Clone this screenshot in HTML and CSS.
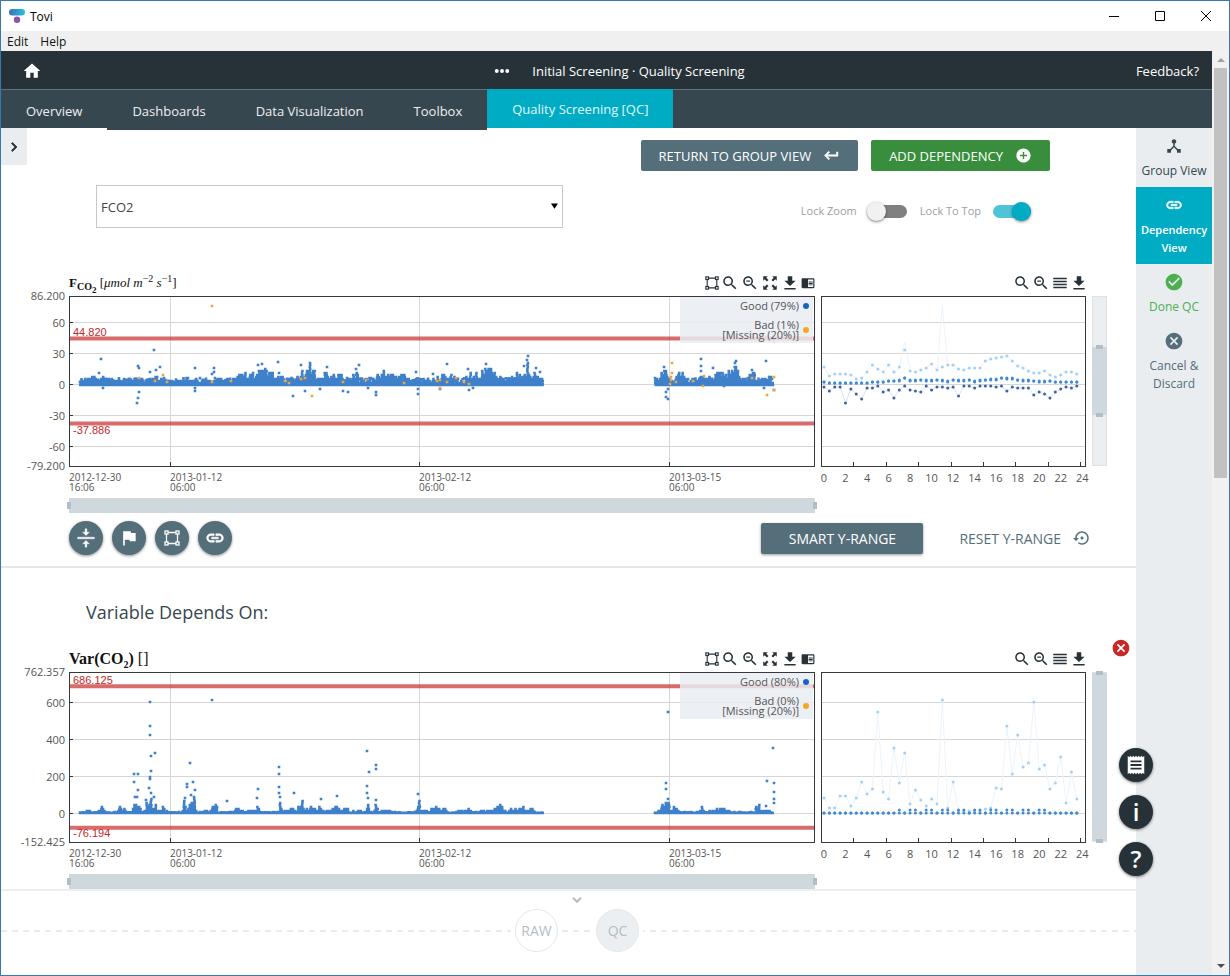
FILE: index.html
```html
<!DOCTYPE html>
<html lang="en">
<head>
  <meta charset="UTF-8">
  <title>Tovi</title>
  <link rel="stylesheet" href="styles.css">
</head>
<body>

  <!-- icon set -->
  <svg class="symbols" aria-hidden="true">
    <symbol id="i-home" viewBox="0 0 24 24"><path d="M10 20v-6h4v6h5v-8h3L12 3 2 12h3v8z"/></symbol>
    <symbol id="i-more" viewBox="0 0 24 24"><circle cx="5" cy="12" r="2.6"/><circle cx="12" cy="12" r="2.6"/><circle cx="19" cy="12" r="2.6"/></symbol>
    <symbol id="i-right" viewBox="0 0 24 24"><path d="M8.6 16.6L13.2 12 8.6 7.400 10 6l6 6-6 6z" stroke="currentColor"/></symbol>
    <symbol id="i-down" viewBox="0 0 24 24"><path d="M6 8.600L12 14.600l6-6" fill="none" stroke="currentColor" stroke-width="3"/></symbol>
    <symbol id="i-return" viewBox="0 0 24 24"><path d="M19 7v4H5.830l3.580-3.590L8 6l-6 6 6 6 1.410-1.410L5.830 13H21V7z" stroke="currentColor" stroke-width=".8"/></symbol>
    <symbol id="i-add" viewBox="0 0 24 24"><path d="M12 2C6.480 2 2 6.480 2 12s4.480 10 10 10 10-4.480 10-10S17.520 2 12 2zm5 11h-4v4h-2v-4H7v-2h4V7h2v4h4v2z"/></symbol>
    <symbol id="i-link" viewBox="0 0 24 24"><path d="M3.900 12c0-1.710 1.390-3.100 3.100-3.100h4V7H7c-2.760 0-5 2.240-5 5s2.240 5 5 5h4v-1.900H7c-1.710 0-3.100-1.390-3.100-3.100zM8 13h8v-2H8v2zm9-6h-4v1.900h4c1.710 0 3.100 1.390 3.100 3.100s-1.390 3.100-3.100 3.100h-4V17h4c2.760 0 5-2.240 5-5s-2.240-5-5-5z" stroke="currentColor" stroke-width=".7"/></symbol>
    <symbol id="i-check" viewBox="0 0 24 24"><path d="M12 2C6.480 2 2 6.480 2 12s4.480 10 10 10 10-4.480 10-10S17.520 2 12 2zm-2 15l-5-5 1.410-1.410L10 14.170l7.590-7.590L19 8l-9 9z"/></symbol>
    <symbol id="i-cancel" viewBox="0 0 24 24"><path d="M12 2C6.470 2 2 6.470 2 12s4.470 10 10 10 10-4.470 10-10S17.530 2 12 2zm5 13.590L15.590 17 12 13.410 8.410 17 7 15.590 10.590 12 7 8.410 8.410 7 12 10.590 15.590 7 17 8.410 13.410 12 17 15.590z"/></symbol>
    <symbol id="i-hub" viewBox="0 0 24 24"><path d="M17 16l-4-4V8.820C14.160 8.400 15 7.300 15 6c0-1.660-1.340-3-3-3S9 4.340 9 6c0 1.300.84 2.400 2 2.820V12l-4 4H3v5h5v-3.050l4-4.200 4 4.200V21h5v-5h-4z"/></symbol>
    <symbol id="i-search" viewBox="0 0 24 24"><path d="M15.500 14h-.79l-.28-.27C15.410 12.590 16 11.110 16 9.500 16 5.910 13.090 3 9.500 3S3 5.910 3 9.500 5.910 16 9.500 16c1.610 0 3.090-.59 4.230-1.570l.27.28v.79l5 4.990L20.490 19l-4.990-5zm-6 0C7.010 14 5 11.990 5 9.500S7.010 5 9.500 5 14 7.010 14 9.500 11.990 14 9.500 14z"/></symbol>
    <symbol id="i-zoomout" viewBox="0 0 24 24"><use href="#i-search"/><path d="M7 8.700h5v1.600H7z"/></symbol>
    <symbol id="i-select" viewBox="0 0 16 16"><g fill="none" stroke="currentColor" stroke-width="1.300"><path d="M4 2.500h8M4 13.500h8M2.500 4v8M13.500 4v8"/><rect x="1" y="1" width="3" height="3"/><rect x="12" y="1" width="3" height="3"/><rect x="1" y="12" width="3" height="3"/><rect x="12" y="12" width="3" height="3"/></g></symbol>
    <symbol id="i-expand" viewBox="0 0 24 24"><path d="M3 3h6L7 5l3 3-2 2-3-3-2 2zM21 3v6l-2-2-3 3-2-2 3-3-2-2zM3 21v-6l2 2 3-3 2 2-3 3 2 2zM21 21h-6l2-2-3-3 2-2 3 3 2-2z"/></symbol>
    <symbol id="i-download" viewBox="0 0 24 24"><path d="M19.500 9H15V3H9v6H4.500l7.500 7zM4.500 18.500v2h15v-2z"/></symbol>
    <symbol id="i-reader" viewBox="0 0 24 24"><path d="M13 12h7v1.500h-7zm0-2.500h7V11h-7zm0 5h7V16h-7zM21 4H3c-1.100 0-2 .9-2 2v13c0 1.100.9 2 2 2h18c1.100 0 2-.9 2-2V6c0-1.100-.9-2-2-2zm0 15h-9V6h9v13z"/></symbol>
    <symbol id="i-lines" viewBox="0 0 24 24"><path d="M3 15h18v-2H3zM3 19h18v-2H3zM3 11h18V9H3zM3 5v2h18V5z"/></symbol>
    <symbol id="i-center" viewBox="0 0 24 24"><path d="M8 19h3v4h2v-4h3l-4-4zM16 5h-3V1h-2v4H8l4 4zM2 11v2h20v-2z" stroke="currentColor" stroke-width=".5"/></symbol>
    <symbol id="i-flag" viewBox="0 0 24 24"><path d="M14.400 6L14 4H5v17h2v-7h5.600l.4 2h7V6z"/></symbol>
    <symbol id="i-restore" viewBox="0 0 24 24"><path d="M14 12c0-1.100-.9-2-2-2s-2 .9-2 2 .9 2 2 2 2-.9 2-2zm-2-9c-4.970 0-9 4.030-9 9H0l4 4 4-4H5c0-3.870 3.130-7 7-7s7 3.130 7 7-3.130 7-7 7c-1.510 0-2.910-.49-4.060-1.300l-1.420 1.440C8.040 20.300 9.940 21 12 21c4.970 0 9-4.030 9-9s-4.030-9-9-9z"/></symbol>
    <symbol id="i-notes" viewBox="0 0 24 24"><path d="M18 17H6v-2h12v2zm0-4H6v-2h12v2zm0-4H6V7h12v2zM3 22l1.500-1.500L6 22l1.500-1.500L9 22l1.500-1.500L12 22l1.500-1.500L15 22l1.500-1.500L18 22l1.500-1.500L21 22V2l-1.500 1.500L18 2l-1.500 1.500L15 2l-1.500 1.500L12 2l-1.500 1.500L9 2 7.500 3.500 6 2 4.500 3.500 3 2z"/></symbol>
  </svg>

  <div class="window">
    <div class="titlebar">
      <svg class="logo" viewBox="0 0 16 14" aria-hidden="true">
        <defs>
          <linearGradient id="logoBar"><stop offset="0" stop-color="#3b6fb8"/><stop offset="1" stop-color="#27c3dc"/></linearGradient>
        </defs>
        <rect width="16" height="6.500" rx="3.200" fill="url(#logoBar)"/>
        <circle cx="8" cy="10.700" r="3.200" fill="#8d54a8"/>
      </svg>
      <span class="app-name">Tovi</span>
      <button class="win-btn" aria-label="Minimize"><svg viewBox="0 0 10 10"><path d="M0 5.500h10"/></svg></button>
      <button class="win-btn" aria-label="Maximize"><svg viewBox="0 0 10 10"><path d="M.5.5h9v9h-9z"/></svg></button>
      <button class="win-btn" aria-label="Close"><svg viewBox="0 0 10 10"><path d="M0 0l10 10M10 0L0 10"/></svg></button>
    </div>
    <div class="menubar">
      <button>Edit</button>
      <button>Help</button>
    </div>

    <div class="frame">
      <div class="app">
        <header class="header">
          <a href="#" class="home" aria-label="Home"><svg class="icon"><use href="#i-home"/></svg></a>
          <div class="crumbs">
            <svg class="icon"><use href="#i-more"/></svg>
            <span>Initial Screening · Quality Screening</span>
          </div>
          <a href="#" class="feedback">Feedback?</a>
        </header>
        <nav class="tabs">
          <a href="#" class="tab first">Overview</a>
          <a href="#" class="tab">Dashboards</a>
          <a href="#" class="tab">Data Visualization</a>
          <a href="#" class="tab">Toolbox</a>
          <a href="#" class="tab active">Quality Screening [QC]</a>
        </nav>

        <div class="body">
          <main class="main">
            <button class="expander" aria-label="Expand panel"><svg class="icon"><use href="#i-right"/></svg></button>

            <div class="top-actions">
              <button class="btn slate">RETURN TO GROUP VIEW <svg class="icon"><use href="#i-return"/></svg></button>
              <button class="btn green">ADD DEPENDENCY <svg class="icon"><use href="#i-add"/></svg></button>
            </div>

            <div class="controls">
              <div class="picker">
                <select aria-label="Variable"><option>FCO2</option></select>
                <svg viewBox="0 0 8 6" aria-hidden="true"><path d="M0 0h8L4 6z"/></svg>
              </div>
              <div class="switches">
                <label for="lockZoom">Lock Zoom</label>
                <input type="checkbox" id="lockZoom">
                <label for="lockTop">Lock To Top</label>
                <input type="checkbox" id="lockTop" checked>
              </div>
            </div>

            <section class="chart" id="fco2">
              <div class="chart-head">
                <h2 class="math"><b>F<sub>CO<sub>2</sub></sub></b> [<i>μmol m</i><sup>−2</sup> <i>s</i><sup>−1</sup>]</h2>
                <button aria-label="Select"><svg class="icon small"><use href="#i-select"/></svg></button>
                <button aria-label="Zoom in"><svg class="icon"><use href="#i-search"/></svg></button>
                <button aria-label="Zoom out"><svg class="icon"><use href="#i-zoomout"/></svg></button>
                <button aria-label="Expand"><svg class="icon"><use href="#i-expand"/></svg></button>
                <button aria-label="Download"><svg class="icon"><use href="#i-download"/></svg></button>
                <button aria-label="Legend"><svg class="icon small"><use href="#i-reader"/></svg></button>
              </div>
              <div class="chart-head daily-head">
                <button aria-label="Zoom in"><svg class="icon"><use href="#i-search"/></svg></button>
                <button aria-label="Zoom out"><svg class="icon"><use href="#i-zoomout"/></svg></button>
                <button aria-label="Lines"><svg class="icon"><use href="#i-lines"/></svg></button>
                <button aria-label="Download"><svg class="icon"><use href="#i-download"/></svg></button>
              </div>
              <svg class="plot series"></svg>
              <svg class="plot daily"></svg>
              <div class="yslider"><div class="range part"></div></div>
              <div class="xslider"></div>
            </section>

            <div class="chart-actions">
              <button class="round" aria-label="Center"><svg class="icon"><use href="#i-center"/></svg></button>
              <button class="round" aria-label="Flag"><svg class="icon"><use href="#i-flag"/></svg></button>
              <button class="round" aria-label="Select area"><svg class="icon small"><use href="#i-select"/></svg></button>
              <button class="round" aria-label="Link"><svg class="icon"><use href="#i-link"/></svg></button>
              <button class="btn slate smart">SMART Y-RANGE</button>
              <button class="reset">RESET Y-RANGE <svg class="icon"><use href="#i-restore"/></svg></button>
            </div>

            <h3 class="depends">Variable Depends On:</h3>

            <section class="chart" id="varco2">
              <div class="chart-head">
                <h2 class="math large"><b>Var(CO<sub>2</sub>)</b> []</h2>
                <button aria-label="Select"><svg class="icon small"><use href="#i-select"/></svg></button>
                <button aria-label="Zoom in"><svg class="icon"><use href="#i-search"/></svg></button>
                <button aria-label="Zoom out"><svg class="icon"><use href="#i-zoomout"/></svg></button>
                <button aria-label="Expand"><svg class="icon"><use href="#i-expand"/></svg></button>
                <button aria-label="Download"><svg class="icon"><use href="#i-download"/></svg></button>
                <button aria-label="Legend"><svg class="icon small"><use href="#i-reader"/></svg></button>
              </div>
              <div class="chart-head daily-head">
                <button aria-label="Zoom in"><svg class="icon"><use href="#i-search"/></svg></button>
                <button aria-label="Zoom out"><svg class="icon"><use href="#i-zoomout"/></svg></button>
                <button aria-label="Lines"><svg class="icon"><use href="#i-lines"/></svg></button>
                <button aria-label="Download"><svg class="icon"><use href="#i-download"/></svg></button>
              </div>
              <svg class="plot series"></svg>
              <svg class="plot daily"></svg>
              <div class="yslider"><div class="range"></div></div>
              <div class="xslider"></div>
              <button class="remove" aria-label="Remove dependency"><svg class="icon"><use href="#i-cancel"/></svg></button>
            </section>

            <footer class="stages">
              <button class="collapse" aria-label="Collapse"><svg class="icon"><use href="#i-down"/></svg></button>
              <div class="rail">
                <button class="stage">RAW</button>
                <button class="stage current">QC</button>
              </div>
            </footer>

            <div class="floating">
              <button aria-label="Notes"><svg class="icon"><use href="#i-notes"/></svg></button>
              <button>i</button>
              <button>?</button>
            </div>
          </main>

          <aside class="sidebar">
            <a href="#" class="side-item"><svg class="icon"><use href="#i-hub"/></svg>Group View</a>
            <a href="#" class="side-item active"><svg class="icon"><use href="#i-link"/></svg>Dependency View</a>
            <a href="#" class="side-item done"><svg class="icon"><use href="#i-check"/></svg>Done QC</a>
            <a href="#" class="side-item discard"><svg class="icon"><use href="#i-cancel"/></svg>Cancel &amp; Discard</a>
          </aside>
        </div>
      </div>
      <div class="scrollbar">
        <svg class="up" viewBox="0 0 8 4"><path d="M0 4h8L4 0z"/></svg>
        <div class="thumb"></div>
        <svg class="down" viewBox="0 0 8 4"><path d="M0 0h8L4 4z"/></svg>
      </div>
    </div>
  </div>

  <script src="script.js"></script>
</body>
</html>
```
FILE: styles.css
```css
* {
  box-sizing: border-box;
}

body {
  margin: 0;
  font-family: "Open Sans", "Noto Sans", sans-serif;
  font-size: 13px;
  color: #37474f;
  background: #fff;
}

button {
  font-family: inherit;
  font-size: inherit;
  color: inherit;
  padding: 0;
  border: none;
  background: none;
  cursor: pointer;
}

a {
  color: inherit;
  text-decoration: none;
}

.symbols {
  position: absolute;
  width: 0;
  height: 0;
}

.icon {
  display: block;
  width: 18px;
  height: 18px;
  fill: currentColor;
}

.icon.small {
  width: 14px;
}

.window {
  display: flex;
  flex-direction: column;
  min-height: 100vh;
  border: 1px solid #3579ad;
}

/* window chrome */
.titlebar {
  display: flex;
  align-items: center;
  height: 30px;
  padding-left: 8px;
  color: #000;
  font-size: 12px;
}

.logo {
  width: 16px;
  height: 14px;
}

.app-name {
  flex: 1;
  padding-left: 5px;
}

.win-btn {
  width: 46px;
  height: 30px;
}

.win-btn svg {
  width: 10px;
  height: 10px;
  fill: none;
  stroke: #000;
  overflow: visible;
}

.menubar {
  display: flex;
  gap: 12px;
  height: 20px;
  padding-left: 6px;
  background: #f0f0f0;
  color: #111;
  font-size: 12px;
}

.frame {
  display: flex;
  flex: 1;
}

.app {
  flex: 1;
  min-width: 0;
  display: flex;
  flex-direction: column;
}

.scrollbar {
  width: 17px;
  padding: 7px 2px;
  display: flex;
  flex-direction: column;
  align-items: center;
  background: #f1f1f1;
}

.scrollbar svg {
  width: 8px;
  height: 4px;
}

.scrollbar .up {
  fill: #a0a0a0;
}

.scrollbar .down {
  margin-top: auto;
  fill: #505050;
}

.thumb {
  width: 13px;
  height: 45%;
  margin-top: 6px;
  background: #c1c1c1;
}

/* header */
.header {
  display: grid;
  grid-template-columns: 1fr auto 1fr;
  align-items: center;
  height: 39px;
  padding: 1px 13px 0 21px;
  background: #263238;
  border-bottom: 1px solid #62727a;
  color: #fff;
}

.home .icon {
  width: 20px;
  height: 20px;
}

.crumbs {
  display: flex;
  align-items: center;
  gap: 21px;
  margin-left: 17px;
}

.feedback {
  justify-self: end;
}

.tabs {
  display: flex;
  align-items: flex-start;
  height: 38px;
  background: #37474f;
  color: #eceff1;
}

.tab {
  height: 40px;
  padding: 0 25px;
  line-height: 42px;
  background: #37474f;
  white-space: nowrap;
}

.tab.first {
  height: 38px;
}

.tab.active {
  height: 39px;
  line-height: 41px;
  margin-top: -1px;
  background: #00acc4;
  color: #e0f7fa;
}

.body {
  flex: 1;
  display: flex;
}

.main {
  position: relative;
  flex: 1;
  min-width: 0;
  display: flex;
  flex-direction: column;
}

.expander {
  position: absolute;
  left: 0;
  top: 0;
  width: 26px;
  height: 37px;
  padding-left: 4px;
  background: #e9edf0;
  color: #263238;
}

.expander .icon {
  width: 18px;
  height: 18px;
}

/* top controls */
.top-actions {
  display: flex;
  justify-content: flex-end;
  gap: 13px;
  padding: 12px 86px 0 0;
}

.btn {
  display: flex;
  align-items: center;
  justify-content: center;
  gap: 12px;
  height: 31px;
  padding: 0 18px;
  border-radius: 2px;
  color: #fff;
}

.slate {
  background: #546e7a;
}

.green {
  background: #388e3c;
}

.btn .icon {
  width: 17px;
  height: 17px;
}

.controls {
  display: flex;
  align-items: center;
  justify-content: space-between;
  padding: 14px 105px 44px 95px;
}

.picker {
  position: relative;
  flex: 0 1 467px;
}

.picker select {
  appearance: none;
  width: 100%;
  height: 43px;
  padding: 0 4px;
  border: 1px solid #c8c8c8;
  border-radius: 0;
  background: #fff;
  font-family: inherit;
  font-size: 13px;
  color: #444;
}

.picker svg {
  position: absolute;
  right: 5px;
  top: 18px;
  width: 7px;
  height: 6px;
}

.switches {
  display: flex;
  align-items: center;
  gap: 10px;
  padding-top: 8px;
  font-size: 11px;
  color: #9e9e9e;
}

.switches input {
  appearance: none;
  position: relative;
  width: 40px;
  height: 20px;
  margin: 0;
}

.switches input + label {
  margin-left: 3px;
}

.switches input::before {
  content: "";
  position: absolute;
  inset: 4px 0 3px 2px;
  border-radius: 7px;
  background: #808080;
}

.switches input::after {
  content: "";
  position: absolute;
  left: 0;
  top: 1px;
  width: 19px;
  height: 19px;
  border-radius: 50%;
  background: #f1f1f1;
  box-shadow: 0 1px 3px rgba(0, 0, 0, 0.5);
}

.switches input:checked::before {
  background: #4dc5d6;
}

.switches input:checked::after {
  left: 21px;
  background: #00acc4;
}

/* charts */
.chart {
  position: relative;
  display: grid;
  grid-template-columns: minmax(0, 1fr) 265px 15px;
  column-gap: 6px;
  padding: 0 29px 0 68px;
}

.chart-head {
  grid-column: 1;
  display: flex;
  align-items: center;
  gap: 2px;
  height: 24px;
  padding-bottom: 3px;
  color: #263238;
}

.daily-head {
  grid-column: 2;
  justify-content: flex-end;
  gap: 1px;
  margin-right: -2px;
}

.math {
  flex: 1;
  margin: 0;
  font-family: "Liberation Serif", serif;
  font-size: 13px;
  font-weight: normal;
  line-height: 20px;
  color: #111;
}

.math.large {
  font-size: 16px;
}

.math sub,
.math sup {
  font-size: 10px;
  line-height: 0;
}

.math sub sub {
  font-size: 9px;
}

.plot {
  width: 100%;
  height: 200px;
  overflow: visible;
}

.series {
  grid-column: 1;
}

.daily {
  grid-column: 2;
}

.plot text {
  font-size: 11px;
  fill: #555;
}

.plot .date {
  font-size: 10px;
}

.plot .frame-line {
  fill: none;
  stroke: #37383c;
}

.plot .tick {
  stroke: #37383c;
}

.plot .grid {
  stroke: #d6d6d6;
}

.plot .limit {
  stroke: #c62828;
  stroke-width: 4;
  opacity: 0.68;
}

.plot .limit-text {
  font-family: "Liberation Sans", Arial, sans-serif;
  font-size: 11px;
  fill: #c62828;
}

.plot .good {
  fill: #3f80cb;
}

.plot .bad {
  fill: #e9a63c;
}

.plot .legend-bg {
  fill: #e9ecf2;
  opacity: 0.85;
}

.plot .legend-good {
  fill: #1565c0;
}

.plot .legend-bad {
  fill: #f5a623;
}

.plot .high {
  fill: #a6cff0;
}

.plot .mid {
  fill: #3d8bd6;
}

.plot .low {
  fill: #40609f;
}

.plot .trace {
  fill: none;
  stroke: #ecf4fb;
}

.plot .trace.dark {
  stroke: #d9e2f0;
}

.xslider {
  grid-column: 1;
  position: relative;
  height: 15px;
  margin-top: 2px;
  background: #cfd8dc;
}

.xslider::before,
.xslider::after {
  content: "";
  position: absolute;
  top: 4px;
  left: -2px;
  width: 4px;
  height: 7px;
  background: #b0bec5;
}

.xslider::after {
  left: auto;
  right: -2px;
}

.yslider {
  grid-column: 3;
  position: relative;
  height: 170px;
  background: #eceff1;
  border: 1px solid #dfe2e4;
}

.range {
  position: absolute;
  inset: 0 -1px;
  background: #cfd8dc;
}

.range.part {
  inset: 30% -1px;
}

.range::before,
.range::after {
  content: "";
  position: absolute;
  left: 4px;
  top: -2px;
  width: 7px;
  height: 4px;
  background: #b0bec5;
}

.range::after {
  top: auto;
  bottom: -2px;
}

.chart-actions {
  display: flex;
  align-items: center;
  gap: 9px;
  padding: 8px 45px 11px 68px;
  border-bottom: 2px solid #e6e6e6;
}

.round {
  display: flex;
  align-items: center;
  justify-content: center;
  width: 34px;
  height: 34px;
  border-radius: 50%;
  background: #546e7a;
  color: #fff;
  box-shadow: 0 1px 3px rgba(0, 0, 0, 0.45);
}

.round .icon {
  width: 20px;
  height: 20px;
}

.round .icon.small {
  width: 16px;
  height: 16px;
}

.smart {
  width: 162px;
  margin-left: auto;
  margin-right: 27px;
  font-size: 14px;
  box-shadow: 0 1px 3px rgba(0, 0, 0, 0.4);
}

.reset {
  display: flex;
  align-items: center;
  gap: 12px;
  font-size: 14px;
  color: #546e7a;
}

.depends {
  margin: 0;
  padding: 32px 85px 24px;
  font-size: 18px;
  font-weight: normal;
  line-height: 24px;
}

.remove {
  position: absolute;
  top: -10px;
  right: 5px;
  color: #c62828;
}

.remove .icon {
  width: 20px;
  height: 20px;
}

/* stages footer */
.stages {
  flex: 1;
  border-top: 2px solid #eceff1;
}

.collapse {
  display: block;
  margin: 1px auto 0;
  padding-left: 17px;
  color: #b0bec5;
}

.collapse .icon {
  width: 16px;
  height: 16px;
}

.rail {
  display: flex;
  justify-content: center;
  gap: 38px;
  padding-left: 17px;
  margin-top: 1px;
  background: repeating-linear-gradient(90deg, #e8ecee 0 6px, transparent 6px 11px) 0 50% / 100% 2px no-repeat;
}

.stage {
  width: 43px;
  height: 43px;
  border: 1px solid #e3e8ea;
  border-radius: 50%;
  background: #fff;
  color: #b0bec5;
  font-size: 14px;
  box-shadow: 0 0 0 4px #fff;
}

.stage.current {
  background: #eceff1;
}

.floating {
  position: absolute;
  right: -17px;
  bottom: 99px;
  display: flex;
  flex-direction: column;
  gap: 13px;
}

.floating button {
  display: flex;
  align-items: center;
  justify-content: center;
  width: 34px;
  height: 34px;
  border-radius: 50%;
  background: #263238;
  color: #fff;
  font-size: 24px;
  font-weight: 600;
  line-height: 34px;
  box-shadow: 0 1px 3px rgba(0, 0, 0, 0.5);
}

.floating .icon {
  width: 22px;
  height: 22px;
}

/* right sidebar */
.sidebar {
  width: 76px;
  background: #e9edf0;
}

.side-item {
  display: flex;
  flex-direction: column;
  align-items: center;
  gap: 7px;
  padding: 9px 0 7px;
  font-size: 12px;
  line-height: 18px;
  text-align: center;
}

.side-item.active {
  background: #00acc4;
  color: #fff;
  font-size: 11px;
  font-weight: 600;
}

.side-item .icon {
  width: 20px;
  height: 18px;
}

.side-item.done .icon,
.side-item.discard .icon {
  height: 20px;
  margin: -1px 0;
}

.done {
  color: #4caf50;
}

.discard {
  color: #546e7a;
}
```
FILE: script.js
```js
const HEIGHT = 170;
const BASE_WIDTH = 746;

const charts = [
  {
    id: "fco2",
    max: 86.2,
    min: -79.2,
    ends: ["86.200", "-79.200"],
    ticks: [60, 30, 0, -30, -60],
    limits: [[44.82, "44.820", 40], [-37.886, "-37.886", 138]],
    legend: ["Good (79%)", "Bad (1%)"],
    base: 89,
    band: [82, 6],
    // x, top of the point cloud
    cloud: [
      [[11, 84], [18, 81], [28, 78], [37, 79], [44, 82], [51, 80], [61, 83], [66, 79], [74, 82], [84, 80], [88, 77], [101, 84], [118, 82], [128, 80], [138, 83], [145, 79], [151, 82], [164, 80], [173, 75], [181, 76], [189, 73], [193, 72], [198, 72], [203, 76], [210, 78], [218, 82], [228, 79], [233, 70], [236, 77], [241, 66], [246, 73], [251, 79], [253, 75], [256, 74], [261, 79], [270, 76], [276, 82], [287, 75], [291, 80], [299, 83], [308, 78], [314, 69], [317, 77], [322, 75], [328, 80], [334, 77], [341, 82], [350, 82], [364, 81], [374, 77], [379, 75], [386, 80], [394, 83], [401, 75], [406, 74], [410, 70], [414, 72], [418, 67], [423, 71], [426, 75], [433, 81], [441, 81], [446, 75], [450, 72], [454, 75], [458, 62], [461, 78], [466, 71], [471, 76], [473, 78]],
      [[586, 79], [593, 76], [596, 72], [599, 82], [608, 75], [611, 69], [614, 76], [621, 82], [628, 80], [633, 76], [639, 79], [644, 74], [651, 73], [658, 72], [664, 73], [667, 64], [669, 75], [673, 82], [679, 80], [684, 75], [688, 82], [694, 78], [699, 79], [704, 83]]
    ],
    good: [[32, 63], [85, 54], [69, 70], [70, 72], [81, 76], [87, 74], [91, 71], [30, 77], [34, 92], [68, 107], [69, 102], [70, 96], [126, 72], [126, 95], [126, 92], [145, 72], [145, 76], [143, 78], [189, 69], [193, 68], [209, 66], [210, 77], [224, 100], [236, 95], [232, 69], [241, 67], [258, 71], [290, 69], [287, 73], [307, 99], [307, 96], [279, 96], [274, 95], [251, 93], [299, 92], [347, 76], [349, 98], [349, 93], [378, 68], [364, 78], [371, 93], [400, 94], [404, 92], [399, 73], [459, 60], [458, 64], [459, 67], [455, 70], [467, 72], [471, 76], [417, 68], [595, 71], [632, 63], [632, 70], [632, 75], [644, 72], [667, 65], [666, 67], [597, 96], [597, 101], [599, 103], [599, 93], [683, 74], [697, 65], [702, 81], [655, 90], [695, 92], [705, 94]],
    bad: [[143, 10], [70, 82], [86, 85], [94, 79], [98, 86], [143, 86], [162, 85], [216, 85], [220, 87], [232, 83], [236, 82], [243, 100], [274, 86], [297, 84], [335, 87], [368, 85], [371, 84], [371, 92], [378, 86], [387, 82], [395, 86], [400, 88], [603, 67], [603, 77], [602, 81], [602, 84], [601, 88], [607, 86], [624, 85], [635, 80], [634, 90], [683, 82], [705, 81], [705, 94], [698, 99], [705, 45]],
    high: [71, 80, 78, 78, 78, 79, 83, 82, 76, 69, 73, 76, 69, 76, 71, 54, 75, 76, 74, 72, 68, 74, 71, 69, 69, 73, 74, 72, 72, 72, 65, 63, 62, 61, 60, 65, 70, 72, 75, 77, 77, 75, 79, 81, 79, 76, 76, 78],
    peaks: { 15: 46, 22: 10 },
    mid: [86, 87, 87, 87, 87, 87, 87, 87, 87, 86, 86, 86, 85, 85, 84, 82, 84, 84, 84, 84, 84, 84, 84, 85, 84, 84, 84, 84, 85, 84, 84, 83, 83, 82, 82, 82, 84, 84, 84, 85, 85, 85, 85, 86, 86, 86, 86, 86],
    step: 1,
    low: [91, 95, 91, 91, 107, 93, 98, 103, 92, 92, 90, 96, 94, 102, 94, 90, 94, 95, 96, 90, 94, 91, 91, 92, 91, 100, 90, 90, 92, 90, 90, 90, 91, 90, 95, 91, 92, 92, 92, 99, 96, 98, 102, 96, 93, 91, 92, 90]
  },
  {
    id: "varco2",
    max: 762.357,
    min: -152.425,
    ends: ["762.357", "-152.425"],
    ticks: [600, 400, 200, 0],
    limits: [[686.125, "686.125", 12], [-76.194, "-76.194", 165]],
    legend: ["Good (80%)", "Bad (0%)"],
    base: 141,
    band: [140, 1],
    cloud: [
      [[11, 140], [20, 137], [28, 140], [33, 131], [36, 139], [48, 140], [49, 131], [53, 134], [60, 140], [63, 139], [64, 129], [65, 124], [66, 133], [68, 124], [70, 127], [72, 139], [76, 136], [77, 126], [78, 139], [80, 124], [82, 120], [83, 136], [86, 123], [87, 138], [94, 134], [100, 140], [112, 140], [114, 128], [116, 125], [118, 138], [121, 128], [122, 122], [124, 124], [125, 114], [126, 128], [127, 140], [141, 138], [144, 126], [147, 129], [149, 139], [165, 139], [170, 133], [175, 140], [186, 136], [189, 130], [191, 139], [209, 140], [210, 116], [211, 126], [213, 139], [224, 133], [226, 139], [233, 127], [236, 136], [243, 131], [246, 139], [252, 129], [255, 140], [267, 129], [270, 139], [277, 134], [280, 140], [290, 135], [294, 140], [297, 138], [298, 120], [300, 139], [306, 137], [307, 126], [309, 140], [316, 135], [325, 140], [345, 140], [349, 130], [350, 121], [351, 134], [360, 139], [365, 132], [373, 134], [382, 140], [398, 134], [406, 140], [421, 136], [431, 131], [435, 139], [454, 132], [456, 139], [461, 134], [466, 140], [473, 140]],
      [[586, 140], [590, 138], [593, 129], [596, 132], [597, 126], [599, 124], [601, 138], [604, 132], [612, 140], [630, 140], [632, 130], [636, 140], [657, 133], [660, 139], [685, 140], [688, 129], [692, 139], [697, 136], [703, 140], [704, 133]]
    ],
    good: [[81, 30], [81, 54], [81, 63], [86, 81], [82, 84], [82, 99], [81, 105], [81, 107], [80, 116], [82, 121], [65, 102], [69, 102], [65, 110], [69, 118], [66, 125], [68, 125], [77, 128], [85, 125], [143, 28], [121, 91], [118, 112], [118, 115], [124, 110], [126, 118], [122, 123], [116, 126], [158, 129], [189, 117], [188, 126], [210, 95], [210, 102], [210, 115], [210, 121], [211, 125], [225, 121], [268, 124], [252, 127], [298, 79], [300, 100], [307, 93], [307, 97], [298, 114], [298, 121], [299, 126], [307, 128], [349, 122], [599, 40], [597, 111], [597, 117], [599, 127], [704, 76], [698, 109], [705, 111], [705, 120], [705, 127], [705, 131], [697, 134]],
    bad: [],
    high: [126, 136, 136, 124, 124, 134, 126, 110, 122, 117, 40, 120, 127, 76, 111, 81, 132, 118, 128, 134, 127, 132, 28, 136, 110, 139, 139, 139, 139, 139, 137, 136, 116, 117, 54, 102, 63, 95, 91, 30, 97, 93, 117, 111, 85, 131, 100, 127],
    peaks: {},
    mid: [141, 141, 141, 141, 141, 141, 141, 141, 141, 141, 141, 141, 141, 141, 141, 141, 141, 141, 141, 141, 141, 141, 141, 141, 141, 141, 141, 141, 141, 141, 141, 141, 141, 141, 141, 141, 141, 141, 141, 141, 141, 141, 141, 141, 141, 141, 141, 141],
    step: -3,
    low: []
  }
];

// small seeded generator, keeps the cloud the same on every redraw
function random(seed) {
  return function () {
    seed = (seed * 16807) % 2147483647;
    return seed / 2147483647;
  };
}

function line(cls, x1, y1, x2, y2) {
  return `<line class="${cls}" x1="${x1}" y1="${y1}" x2="${x2}" y2="${y2}"/>`;
}

function text(x, y, str, anchor = "start", cls = "") {
  return `<text class="${cls}" x="${x}" y="${y}" text-anchor="${anchor}">${str}</text>`;
}

function dots(cls, points) {
  const d = points.map(p => `M${p[0] - 1.3} ${p[1] - 1.3}h2.600v2.600h-2.600z`).join("");
  return `<path class="${cls}" d="${d}"/>`;
}

function circles(cls, points) {
  return points.map(p => `<circle class="${cls}" cx="${p[0]}" cy="${p[1]}" r="1.5"/>`).join("");
}

function topAt(cloud, x) {
  for (let i = 1; i < cloud.length; i++) {
    const [x0, y0] = cloud[i - 1];
    const [x1, y1] = cloud[i];
    if (x >= x0 && x <= x1) return y0 + (y1 - y0) * (x - x0) / (x1 - x0);
  }
  return cloud[cloud.length - 1][1];
}

function exactY(chart, value) {
  return (chart.max - value) / (chart.max - chart.min) * HEIGHT;
}

function yOf(chart, value) {
  return Math.floor(exactY(chart, value)) + 0.5;
}

function drawSeries(chart) {
  const svg = document.querySelector(`#${chart.id} .series`);
  const w = Math.round(svg.getBoundingClientRect().width);
  const k = w / BASE_WIDTH;
  const rand = random(71);
  let out = "";

  chart.ticks.forEach(t => {
    const y = yOf(chart, t);
    out += line("grid", 0, y, w, y) + line("tick", 0, y, 4, y) + text(-4, y + 4, t, "end");
  });
  out += text(-4, 4, chart.ends[0], "end") + text(-4, HEIGHT + 4, chart.ends[1], "end");

  const dates = [[0, "2012-12-30", "16:06"], [101, "2013-01-12", "06:00"], [350, "2013-02-12", "06:00"], [600, "2013-03-15", "06:00"]];
  dates.forEach(([x, day, hour]) => {
    const px = Math.round(x * k);
    if (x) out += line("grid", px + 0.5, 0, px + 0.5, HEIGHT) + line("tick", px + 0.5, HEIGHT - 4, px + 0.5, HEIGHT);
    out += text(px, 185, day, "start", "date") + text(px, 195, hour, "start", "date");
  });

  // every column is filled from the base up to a height of its own
  const points = [];
  chart.cloud.forEach(cloud => {
    const end = cloud[cloud.length - 1][0];
    for (let x = cloud[0][0]; x <= end; x += 1.5) {
      const reach = (chart.base - topAt(cloud, x)) * (0.35 + 0.65 * rand());
      for (let up = 0; up <= reach; up += 2) {
        points.push([(x + rand()) * k, chart.base - up]);
      }
      points.push([x * k, chart.band[0] + rand() * chart.band[1]]);
      points.push([(x + 0.7) * k, chart.band[0] + chart.band[1]]);
    }
  });
  out += dots("good", points);
  out += dots("good", chart.good.map(p => [p[0] * k, p[1]]));
  out += dots("bad", chart.bad.map(p => [p[0] * k, p[1]]));

  chart.limits.forEach(([value, label, y]) => {
    const ly = exactY(chart, value);
    out += line("limit", 0, ly, w, ly) + text(4, y, label, "start", "limit-text");
  });

  out += `<rect class="legend-bg" x="${w - 135}" y="1" width="133" height="46"/>`;
  out += text(w - 16, 14, chart.legend[0], "end") + text(w - 16, 33, chart.legend[1], "end") + text(w - 16, 43, "[Missing (20%)]", "end");
  out += `<circle class="legend-good" cx="${w - 9}" cy="10" r="3"/><circle class="legend-bad" cx="${w - 9}" cy="34" r="3"/>`;
  out += `<rect class="frame-line" x="0.5" y="0.5" width="${w - 1}" height="${HEIGHT}"/>`;
  svg.innerHTML = out;
}

function drawDaily(chart) {
  const svg = document.querySelector(`#${chart.id} .daily`);
  const w = Math.round(svg.getBoundingClientRect().width);
  const step = w * 0.0203;
  const at = (y, i) => [3 + i * step, y];
  const trace = values => "M" + values.map((y, i) => at(y, i).join(" ")).join("L");
  let out = "";

  chart.ticks.forEach(t => {
    const y = yOf(chart, t);
    out += line("grid", 0, y, w, y);
  });
  for (let h = 3; h <= 24; h += 3) {
    const x = Math.round(h / 24 * (w - 6)) + 0.5;
    out += line("tick", x, HEIGHT - 4, x, HEIGHT);
  }
  for (let h = 0; h <= 24; h += 2) {
    out += text(3 + h * 2 * step, 186, h, "middle");
  }

  const highLine = chart.high.map((y, i) => chart.peaks[i] || y);
  out += `<path class="trace" d="${trace(highLine)}"/>`;
  if (chart.low.length) out += `<path class="trace dark" d="${trace(chart.low)}"/>`;
  out += circles("high", chart.high.map(at));
  // second quartile only leaves the median during the day
  out += circles("mid", chart.mid.map((y, i) => at(y + (i > 13 && i < 42 && i % 3 ? chart.step : 0), i)));
  out += circles("mid", chart.mid.map(at));
  out += circles("low", chart.low.map(at));
  out += `<rect class="frame-line" x="0.5" y="0.5" width="${w - 1}" height="${HEIGHT}"/>`;
  svg.innerHTML = out;
}

function draw() {
  charts.forEach(chart => {
    drawSeries(chart);
    drawDaily(chart);
  });
}

draw();
window.addEventListener("resize", draw);
```
